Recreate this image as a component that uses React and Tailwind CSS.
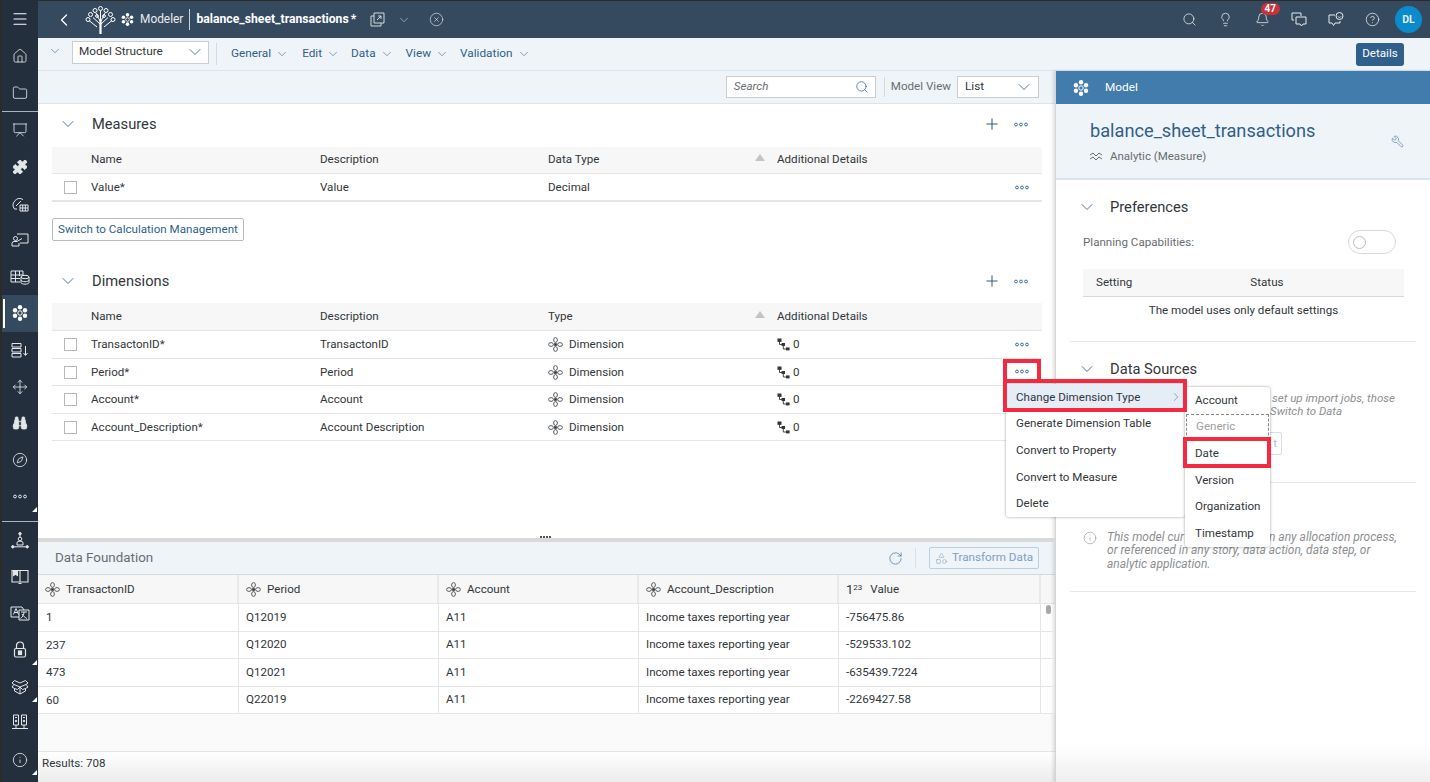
import {
  Binoculars, Bell, ChevronDown, ChevronLeft, ChevronRight, CircleHelp, CircleX, Compass, Folder,
  House, Info, Lightbulb, Menu, Plus, Presentation, Puzzle, RotateCw, Search, Wrench, Move, Shapes,
} from 'lucide-react'

const FONT = 'font-["Roboto",Arial,sans-serif]'

function Dots({ className = 'text-[#3f6d96]' }) {
  return (
    <svg width="14" height="5" viewBox="0 0 14 5" className={className} fill="none" stroke="currentColor" strokeWidth="1">
      <circle cx="2" cy="2.5" r="1.4" />
      <circle cx="7" cy="2.5" r="1.4" />
      <circle cx="12" cy="2.5" r="1.4" />
    </svg>
  )
}

function ModelIcon({ size = 16, className = 'text-white' }) {
  return (
    <svg width={size} height={size} viewBox="0 0 16 16" className={className} fill="currentColor">
      <circle cx="8" cy="2.3" r="2.2" />
      <circle cx="13" cy="5.2" r="2.2" />
      <circle cx="13" cy="10.8" r="2.2" />
      <circle cx="8" cy="13.7" r="2.2" />
      <circle cx="3" cy="10.8" r="2.2" />
      <circle cx="3" cy="5.2" r="2.2" />
      <circle cx="8" cy="8" r="2.2" fill="none" stroke="currentColor" strokeWidth="1" />
    </svg>
  )
}

function DimIcon() {
  return (
    <svg width="15" height="15" viewBox="0 0 15 15" fill="none" stroke="#4b4f53" strokeWidth="0.9" className="shrink-0">
      <ellipse cx="7.5" cy="3" rx="1.9" ry="2.4" />
      <ellipse cx="7.5" cy="12" rx="1.9" ry="2.4" />
      <ellipse cx="3" cy="7.5" rx="2.4" ry="1.9" />
      <ellipse cx="12" cy="7.5" rx="2.4" ry="1.9" />
      <circle cx="7.5" cy="7.5" r="1.3" fill="#32363a" />
    </svg>
  )
}

function HierarchyIcon() {
  return (
    <svg width="13" height="13" viewBox="0 0 13 13" fill="#32363a" className="shrink-0">
      <rect x="0.5" y="0.5" width="4" height="3.4" />
      <rect x="4.6" y="5" width="3.4" height="3" />
      <rect x="9" y="9.4" width="3.6" height="3" />
      <path d="M2.5 3.5v3h2.5M6.3 8v3h3" fill="none" stroke="#32363a" strokeWidth="0.9" />
    </svg>
  )
}

function TreeLogo() {
  return (
    <svg width="31" height="30" viewBox="0 0 31 30" fill="none" stroke="white" strokeWidth="1" className="shrink-0">
      <path d="M15 29V15M16 29V15" strokeWidth="1.2" />
      <path d="M15 19L8 12.5M16 19l7-6.5M15 16L11 8M16 16l4-8M15.5 15V6M12 22L4 15.5M19 22l8-6.5" />
      <circle cx="15.5" cy="3.5" r="2" />
      <circle cx="10" cy="5.5" r="2" />
      <circle cx="21" cy="5.5" r="2" />
      <circle cx="5.5" cy="9.5" r="2" />
      <circle cx="25.5" cy="9.5" r="2" />
      <circle cx="3" cy="14.5" r="2" />
      <circle cx="28" cy="14.5" r="2" />
      <circle cx="12" cy="11" r="1.4" />
      <circle cx="19" cy="11" r="1.4" />
    </svg>
  )
}

// sidebar glyphs the icon packs don't really have
const glyph = 'fill-none stroke-current'

function GaugeTable() {
  return (
    <svg width="18" height="16" viewBox="0 0 18 16" className={glyph} strokeWidth="1">
      <path d="M6 13H3.5A6.5 6.5 0 0 1 12 3.500M5 10l5-5" />
      <path d="M9 9h8v6H9zM9 12h8M11.7 9v6M14.3 9v6" />
    </svg>
  )
}

function PersonBoard() {
  return (
    <svg width="18" height="16" viewBox="0 0 18 16" className={glyph} strokeWidth="1">
      <path d="M6 2h11v9h-8" />
      <circle cx="4.500" cy="6.500" r="2" />
      <path d="M1 14v-2.500a2 2 0 0 1 2-2h3l5-3M1 14h7v-3" />
    </svg>
  )
}

function TableDb() {
  return (
    <svg width="20" height="16" viewBox="0 0 20 16" className={glyph} strokeWidth="1">
      <path d="M10 13H1V2h12v4M1 6h12M1 9.500h9M5.500 2v11M9.500 2v5" />
      <ellipse cx="15" cy="8" rx="4" ry="1.700" />
      <path d="M11 8v5.500c0 1 1.800 1.700 4 1.700s4-.7 4-1.700V8M11 11c0 1 1.800 1.700 4 1.700s4-.7 4-1.700" />
    </svg>
  )
}

function StackDown() {
  return (
    <svg width="18" height="16" viewBox="0 0 18 16" className={glyph} strokeWidth="1">
      <path d="M1 1.500h9v3.500H1zM1 6.500h9V10H1zM1 11.500h9V15H1zM14.500 4v9M12.500 11l2 2.500 2-2.500" />
    </svg>
  )
}

function NetPerson() {
  return (
    <svg width="18" height="17" viewBox="0 0 18 17" className={glyph} strokeWidth="1">
      <circle cx="9" cy="1.700" r="1.200" className="fill-current" />
      <circle cx="1.800" cy="14.800" r="1.200" className="fill-current" />
      <circle cx="16.200" cy="14.800" r="1.200" className="fill-current" />
      <path d="M3 14.800h12M9 3v2" />
      <circle cx="9" cy="7" r="1.800" />
      <path d="M6 13v-2a2 2 0 0 1 2-1.800h2a2 2 0 0 1 2 1.800v2z" />
    </svg>
  )
}

function SquareBook() {
  return (
    <svg width="18" height="15" viewBox="0 0 18 15" className={glyph} strokeWidth="1.100">
      <path d="M1 1.500h16v11.500H1zM9 1.500V13M7.500 14.500h3" />
      <path d="M2.500 1.500h4v5l-2-1.200-2 1.200z" className="fill-current" />
    </svg>
  )
}

function TranslateBoxes() {
  return (
    <svg width="20" height="15" viewBox="0 0 20 15" className={glyph} strokeWidth="1">
      <path d="M9 11H1V1h11l2 3" />
      <path d="M9 4h10v10H9z" />
      <path d="M3.500 8.500l2.500-6 2.500 6M4.500 6.500h3M11 6h6M14 6c0 3-1.500 5-3.500 6.500M12 8c1 2 3 3.500 5 4.500" />
    </svg>
  )
}

function LockIcon() {
  return (
    <svg width="14" height="17" viewBox="0 0 14 17" className={glyph} strokeWidth="1.200">
      <path d="M3.500 7.500V4.500a3.500 3.500 0 0 1 7 0v3" />
      <rect x="1.500" y="7.500" width="11" height="8.500" rx="1.500" />
      <rect x="5.500" y="10" width="3" height="3.500" className="fill-current" />
    </svg>
  )
}

function OpenBox() {
  return (
    <svg width="18" height="17" viewBox="0 0 18 17" className={glyph} strokeWidth="1">
      <path d="M9 5L3.500 2.500 1 5l2 1.500L1 9l2.500 1.500M9 5l5.500-2.500L17 5l-2 1.500L17 9l-2.500 1.500M3 6.500L9 9l6-2.500M9 9v7M3.500 10.500V13L9 16l5.500-3v-2.500M9 9l-2.500 2.500-3-1M9 9l2.500 2.500 3-1" />
    </svg>
  )
}

function Racks() {
  return (
    <svg width="18" height="17" viewBox="0 0 18 17" className={glyph} strokeWidth="1">
      <path d="M2.500 1h5v10h-5zM10.500 1h5v10h-5zM5 11v3.500M13 11v3.500M1 14.500h16M4 3.500h2M12 3.500h2" />
      <circle cx="5" cy="7" r="0.800" className="fill-current" />
      <circle cx="13" cy="7" r="0.800" className="fill-current" />
    </svg>
  )
}

function SolidPuzzle(props) {
  return <Puzzle {...props} fill="currentColor" />
}

function SolidBinoculars(props) {
  return <Binoculars {...props} fill="currentColor" />
}

function SideItem({ icon: Icon, active, corner }) {
  return (
    <div className={`relative flex h-[36.6px] items-center justify-center text-[#e4e7ea] ${active ? 'bg-[#354a5f]' : ''}`}>
      {active && <div className="absolute top-1 bottom-1 left-[1px] w-[2px] bg-white" />}
      <Icon size={16} strokeWidth={1.25} />
      {corner && (
        <div className="absolute right-[1px] bottom-[3px] h-0 w-0 border-b-[5px] border-l-[5px] border-b-white border-l-transparent" />
      )}
    </div>
  )
}

function Sidebar() {
  return (
    <div className="flex h-full w-[38px] shrink-0 flex-col border-l-2 border-[#2b2b2b] bg-[#232f3c]">
      <div className="flex h-[38px] items-center justify-center">
        <Menu size={18} strokeWidth={1.5} className="text-white" />
      </div>
      <SideItem icon={House} />
      <SideItem icon={Folder} />
      <div className="h-px shrink-0 bg-[#a9b4be]" />
      <SideItem icon={Presentation} />
      <SideItem icon={SolidPuzzle} />
      <SideItem icon={GaugeTable} />
      <SideItem icon={PersonBoard} />
      <SideItem icon={TableDb} />
      <SideItem icon={ModelIcon} active />
      <SideItem icon={StackDown} />
      <SideItem icon={Move} />
      <SideItem icon={SolidBinoculars} />
      <SideItem icon={Compass} />
      <SideItem icon={() => <Dots className="text-[#e4e7ea]" />} corner />
      <div className="mt-[6px] h-px shrink-0 bg-[#a9b4be]" />
      <SideItem icon={NetPerson} />
      <SideItem icon={SquareBook} />
      <SideItem icon={TranslateBoxes} />
      <SideItem icon={LockIcon} corner />
      <SideItem icon={OpenBox} corner />
      <SideItem icon={Racks} />
      <SideItem icon={Info} corner />
    </div>
  )
}

function PopOut() {
  return (
    <svg width="15" height="15" viewBox="0 0 15 15" fill="none" stroke="currentColor" strokeWidth="1" className="ml-[14px] text-[#d5dade]">
      <path d="M4 1h10v10H4zM4 4H1v10h10v-3M7 8l4-4M8 4h3v3" />
    </svg>
  )
}

function HeaderChat() {
  return (
    <svg width="16" height="15" viewBox="0 0 16 15" fill="none" stroke="currentColor" strokeWidth="1" className="ml-[21px]">
      <path d="M10 4V1H1v7h2" />
      <path d="M5 5h10v7h-3l-1.500 2L9 12H5z" />
    </svg>
  )
}

function HeaderSmile() {
  return (
    <svg width="16" height="15" viewBox="0 0 16 15" fill="none" stroke="currentColor" strokeWidth="1" className="ml-[21px]">
      <path d="M7 3H1v8h3l1.500 2.500L7 11h5V9" />
      <circle cx="11.500" cy="4" r="3.500" />
      <path d="M10 4.500a1.700 1.700 0 0 0 3 0" />
    </svg>
  )
}

function Header() {
  return (
    <div className="flex h-[38px] shrink-0 items-center border-t border-[#2b2b2b] bg-[#354a5f] text-white">
      <ChevronLeft size={20} strokeWidth={1.5} className="ml-[16px]" />
      <div className="ml-[11px]"><TreeLogo /></div>
      <div className="ml-[5px]"><ModelIcon size={13} /></div>
      <span className="ml-[6px] text-[11.9px] text-[#e8ebee]">Modeler</span>
      <div className="ml-[6px] h-[21px] w-px bg-[#c9d0d6]" />
      <span className="ml-[6px] text-[12.2px] font-bold">balance_sheet_transactions</span>
      <span className="ml-[2px] text-[12.2px] font-bold">*</span>
      <PopOut />
      <ChevronDown size={14} strokeWidth={1} className="ml-[12px] text-[#d5dade]" />
      <CircleX size={15} strokeWidth={1} className="ml-[18px] text-[#e8ebee]" />
      <div className="ml-auto flex items-center text-[#e8ebee]">
        <Search size={15} strokeWidth={1.25} />
        <Lightbulb size={15} strokeWidth={1.25} className="ml-[21px]" />
        <div className="relative ml-[22px]">
          <Bell size={15} strokeWidth={1.25} />
          <div className="absolute -top-[9px] -right-[10px] rounded-full bg-[#c9323a] px-[4px] text-[10px] leading-[12px] font-bold text-white">47</div>
        </div>
        <HeaderChat />
        <HeaderSmile />
        <CircleHelp size={15} strokeWidth={1.25} className="ml-[21px]" />
        <div className="mr-[8px] ml-[15px] flex h-[27px] w-[27px] items-center justify-center rounded-full bg-[#0a8ccc] text-[10.5px] font-bold">DL</div>
      </div>
    </div>
  )
}

function ToolMenu({ label, ml }) {
  return (
    <div className={`flex items-center text-[11.8px] text-[#2f5f8a] ${ml}`}>
      {label}
      <ChevronDown size={14} strokeWidth={1} className="ml-[4px]" />
    </div>
  )
}

function Toolbar() {
  return (
    <div className="flex h-[33px] shrink-0 items-center border-b border-[#d8e4ef] bg-[#eff4f9]">
      <ChevronDown size={14} strokeWidth={1} className="mb-[6px] ml-[10px] text-[#2f5f8a]" />
      <div className="mb-[4px] ml-[10px] flex h-[23px] w-[137px] items-center justify-between border border-[#ccc] bg-white pr-[3px] pl-[6px] text-[11.8px] text-[#32363a]">
        Model Structure
        <ChevronDown size={20} strokeWidth={1} className="text-[#2f5f8a]" />
      </div>
      <div className="ml-[7px] h-[22px] w-px bg-[#d4dae0]" />
      <ToolMenu label="General" ml="ml-[14px]" />
      <ToolMenu label="Edit" ml="ml-[13px]" />
      <ToolMenu label="Data" ml="ml-[11px]" />
      <ToolMenu label="View" ml="ml-[12px]" />
      <ToolMenu label="Validation" ml="ml-[11px]" />
      <div className="mr-[26px] ml-auto flex h-[23px] w-[48px] items-center justify-center rounded-[3px] bg-[#2f5f8a] text-[11.6px] text-white">Details</div>
    </div>
  )
}

function SectionHead({ title }) {
  return (
    <div className="flex h-[40px] items-center">
      <ChevronDown size={20} strokeWidth={1} className="ml-[20px] text-[#2f5f8a]" />
      <span className="ml-[14px] text-[14.7px] text-[#32363a]">{title}</span>
      <Plus size={18} strokeWidth={1.4} className="mr-[13px] ml-auto text-[#2f5f8a]" />
      <div className="mr-[27px]"><Dots /></div>
    </div>
  )
}

function TableHead({ third, className }) {
  return (
    <div className={`mr-[13px] ml-[14px] grid grid-cols-[39px_229px_228px_229px_1fr] items-center border-b border-[#e5e5e5] bg-[#f7f7f7] text-[11.6px] text-[#32363a] ${className}`}>
      <div />
      <div>Name</div>
      <div>Description</div>
      <div className="relative">
        {third}
        <div className="absolute top-[3px] right-[12px] h-0 w-0 border-x-[5px] border-b-[7px] border-x-transparent border-b-[#c4c4c4]" />
      </div>
      <div>Additional Details</div>
    </div>
  )
}

function Check() {
  return <div className="ml-[12px] h-[13px] w-[13px] border border-[#b8b8b8] bg-white" />
}

function DimRow({ name, desc, dots }) {
  return (
    <div className="mr-[13px] ml-[14px] grid h-[27.5px] grid-cols-[39px_229px_228px_229px_1fr] items-center border-b border-[#e5e5e5] pt-[1px] text-[11.6px] text-[#32363a]">
      <Check />
      <div>{name}</div>
      <div>{desc}</div>
      <div className="flex items-center gap-[6px]"><DimIcon />Dimension</div>
      <div className="flex items-center gap-[3px]">
        <HierarchyIcon />0
        {dots && <div className="mr-[13px] ml-auto"><Dots /></div>}
      </div>
    </div>
  )
}

function Structure() {
  return (
    <div className="min-h-0 flex-1 bg-white">
      <SectionHead title="Measures" />
      <TableHead third="Data Type" className="mt-[3px] h-[27px]" />
      <div className="mr-[13px] ml-[14px] grid h-[28px] grid-cols-[39px_229px_228px_229px_1fr] items-center border-b-2 border-[#e5e5e5] pt-[1px] text-[11.6px] text-[#32363a]">
        <Check />
        <div>Value*</div>
        <div>Value</div>
        <div>Decimal</div>
        <div className="flex justify-end pr-[13px]"><Dots /></div>
      </div>
      <div className="mt-[16px] ml-[14px] flex h-[23px] w-[192px] items-center justify-center rounded-[2px] border border-[#bbb] bg-white text-[11.6px] whitespace-nowrap text-[#2f5f8a]">
        Switch to Calculation Management
      </div>
      <div className="mt-[20px]"><SectionHead title="Dimensions" /></div>
      <TableHead third="Type" className="mt-[2px] h-[28px]" />
      <DimRow name="TransactonID*" desc="TransactonID" dots />
      <DimRow name="Period*" desc="Period" />
      <DimRow name="Account*" desc="Account" />
      <DimRow name="Account_Description*" desc="Account Description" />
    </div>
  )
}

const dataRows = [
  ['1', 'Q12019', '-756475.86'],
  ['237', 'Q12020', '-529533.102'],
  ['473', 'Q12021', '-635439.7224'],
  ['60', 'Q22019', '-2269427.58'],
]

const dataCols = 'grid-cols-[201px_200px_200px_200px_202px_1fr]'

function HeadCell({ children }) {
  return <div className="flex h-full items-center gap-[6px] border-r-2 border-[#e9e9e9] pt-[1px] pl-[7px]">{children}</div>
}

function DataCell({ children }) {
  return <div className="flex h-full items-center border-r border-[#e5e5e5] pl-[7px]">{children}</div>
}

function DataFoundation() {
  return (
    <div className="flex h-[244px] shrink-0 flex-col">
      <div className="relative h-[4px] shrink-0 bg-[#d9d9d9]">
        <div className="absolute -top-[2px] left-[502px] flex gap-px">
          <div className="h-[2px] w-[2px] bg-[#555]" /><div className="h-[2px] w-[2px] bg-[#555]" />
          <div className="h-[2px] w-[2px] bg-[#555]" /><div className="h-[2px] w-[2px] bg-[#555]" />
        </div>
      </div>
      <div className="flex h-[33px] shrink-0 items-center border-b border-[#d4d9de] bg-[#eff4f9]">
        <span className="ml-[17px] text-[13.4px] text-[#6a6d70]">Data Foundation</span>
        <RotateCw size={15} strokeWidth={1} className="ml-auto text-[#2f5f8a]" />
        <div className="ml-[12px] h-[20px] w-px bg-[#dbe0e5]" />
        <div className="mr-[16px] ml-[13px] flex h-[22px] w-[110px] items-center justify-center gap-[4px] rounded-[2px] border border-[#b9cfe2] text-[11.7px] text-[#7f9fbd]">
          <Shapes size={13} strokeWidth={1} />Transform Data
        </div>
      </div>
      <div className={`grid h-[29px] shrink-0 ${dataCols} items-center border-b border-[#e5e5e5] bg-[#f7f7f7] text-[11.6px] text-[#32363a]`}>
        <HeadCell><DimIcon />TransactonID</HeadCell>
        <HeadCell><DimIcon />Period</HeadCell>
        <HeadCell><DimIcon />Account</HeadCell>
        <HeadCell><DimIcon />Account_Description</HeadCell>
        <HeadCell><span className="text-[13px]">1<sup className="text-[8px]">23</sup></span><span className="ml-[2px]">Value</span></HeadCell>
        <div />
      </div>
      <div className="relative">
        {dataRows.map((r) => (
          <div key={r[0]} className={`grid h-[27.5px] ${dataCols} items-center border-b border-[#e5e5e5] text-[11.6px] text-[#32363a]`}>
            <div className="flex h-full items-center border-r border-[#e5e5e5] pt-[1px] pl-[8px]">{r[0]}</div>
            <DataCell>{r[1]}</DataCell>
            <DataCell>A11</DataCell>
            <DataCell>Income taxes reporting year</DataCell>
            <DataCell>{r[2]}</DataCell>
            <div />
          </div>
        ))}
        <div className="absolute top-[0px] right-[4px] mt-[1px] h-[9px] w-[5px] rounded-full bg-[#a8a8a8]" />
      </div>
      <div className="min-h-0 flex-1 border-b border-[#e5e5e5] bg-[#fafafa]" />
      <div className="flex h-[30px] shrink-0 bg-linear-to-b from-white to-[#ececec]">
        <span className="mt-[3px] ml-[4px] text-[11.6px] text-[#32363a]">Results: 708</span>
      </div>
    </div>
  )
}

function RightPanel() {
  return (
    <div className="flex w-[375px] shrink-0 flex-col border-l border-[#d5d5d5] bg-white shadow-[-2px_0_3px_rgba(0,0,0,0.12)]">
      <div className="flex h-[33px] shrink-0 items-center bg-[#427cac] text-white">
        <div className="ml-[17px]"><ModelIcon size={16} /></div>
        <span className="ml-[16px] text-[11.8px]">Model</span>
      </div>
      <div className="relative h-[76px] shrink-0 border-b-2 border-[#d8e4ef] bg-[#eff4f9]">
        <div className="mt-[14px] ml-[34px] text-[18.2px] leading-[25px] text-[#2f5f8a]">balance_sheet_transactions</div>
        <div className="mt-[5px] ml-[33px] flex items-center gap-[6px] text-[11.5px] leading-[16px] text-[#6a6d70]">
          <svg width="15" height="11" viewBox="0 0 15 11" fill="none" stroke="currentColor" strokeWidth="1">
            <path d="M1 4l3-2 3 3 3-3 3 2M1 8l3-2 3 3 3-3 3 2" />
          </svg>
          Analytic (Measure)
        </div>
        <Wrench size={13} strokeWidth={1} className="absolute top-[31px] right-[26px] -scale-x-100 text-[#2f5f8a]" />
      </div>
      <div className="flex h-[161px] shrink-0 flex-col">
        <div className="mt-[16px] flex items-center">
          <ChevronDown size={20} strokeWidth={1} className="ml-[21px] text-[#2f5f8a]" />
          <span className="ml-[13px] text-[14.7px] text-[#32363a]">Preferences</span>
        </div>
        <div className="mt-[12px] mr-[34px] ml-[27px] flex items-center justify-between">
          <span className="mt-[2px] text-[11.6px] text-[#6a6d70]">Planning Capabilities:</span>
          <div className="flex h-[24px] w-[48px] items-center rounded-full border border-[#d9d9d9] pl-[4px]">
            <div className="h-[13px] w-[13px] rounded-full border border-[#bdbdbd]" />
          </div>
        </div>
        <div className="mt-[15px] mr-[26px] ml-[27px] flex h-[28px] items-center border-b border-[#d9d9d9] bg-[#f7f7f7] text-[11.6px] text-[#32363a]">
          <span className="ml-[13px]">Setting</span>
          <span className="ml-[118px]">Status</span>
        </div>
        <div className="mt-[5px] mr-[26px] ml-[27px] text-center text-[11.6px] text-[#32363a]">The model uses only default settings</div>
      </div>
      <div className="mx-[14px] h-px shrink-0 bg-[#e8e8e8]" />
      <div className="h-[140px] shrink-0">
        <div className="mt-[16px] flex items-center">
          <ChevronDown size={20} strokeWidth={1} className="ml-[21px] text-[#2f5f8a]" />
          <span className="ml-[13px] text-[14.7px] text-[#32363a]">Data Sources</span>
        </div>
        <div className="mt-[12px] text-[11.5px] leading-[13px] text-[#8c8f92] italic">
          <div className="ml-[216px]">set up import jobs, those</div>
          <div className="ml-[214px]">Switch to Data</div>
        </div>
        <div className="mt-[14px] ml-[100px] flex h-[23px] w-[126px] items-center justify-end rounded-[2px] border border-[#d5dfe8] pr-[4px] text-[11.6px] text-[#a9c1d8]">
          t
        </div>
      </div>
      <div className="mx-[14px] h-px shrink-0 bg-[#e8e8e8]" />
      <div className="relative h-[108px] shrink-0">
        <Info size={14} strokeWidth={1} className="absolute top-[48px] left-[27px] text-[#8c8f92]" />
        <div className="mt-[48px] ml-[51px] text-[12px] leading-[13.4px] text-[#8c8f92] italic">
          <div className="flex">
            <span>This model cur</span>
            <span className="ml-[85px]">n any allocation process,</span>
          </div>
          <div>or referenced in any story, data action, data step, or</div>
          <div>analytic application.</div>
        </div>
      </div>
      <div className="mx-[14px] h-px shrink-0 bg-[#e8e8e8]" />
      <div className="min-h-0 flex-1 bg-linear-to-b from-white from-80% to-[#efefef]" />
    </div>
  )
}

function MenuItem({ children, hi, arrow }) {
  return (
    <div className={`flex h-[26.7px] items-center justify-between px-[10px] ${hi ? 'bg-[#e5edf6]' : ''}`}>
      {children}
      {arrow && <ChevronRight size={14} strokeWidth={1} className="-mr-[8px] text-[#6a6d70]" />}
    </div>
  )
}

// menus and red callouts sit on top of the page
function Overlays() {
  return (
    <>
      <div className="absolute top-[384px] left-[1006px] w-[179px] rounded-[3px] bg-white text-[11.6px] text-[#32363a] shadow-[0_0_3px_rgba(0,0,0,0.4)]">
        <MenuItem hi arrow>Change Dimension Type</MenuItem>
        <MenuItem>Generate Dimension Table</MenuItem>
        <MenuItem>Convert to Property</MenuItem>
        <MenuItem>Convert to Measure</MenuItem>
        <MenuItem>Delete</MenuItem>
      </div>
      <div className="absolute top-[387px] left-[1185px] w-[85px] rounded-[3px] bg-white text-[11.6px] text-[#32363a] shadow-[0_0_3px_rgba(0,0,0,0.4)]">
        <MenuItem>Account</MenuItem>
        <div className="mx-[1px] flex h-[26.7px] items-center border border-dashed border-[#888] px-[9px] text-[#a0a0a0]">Generic</div>
        <MenuItem>Date</MenuItem>
        <MenuItem>Version</MenuItem>
        <MenuItem>Organization</MenuItem>
        <MenuItem>Timestamp</MenuItem>
      </div>
      <div className="absolute top-[359px] left-[1003px] flex h-[24px] w-[38px] items-center justify-center border-4 border-[#f42a41] bg-white"><Dots /></div>
      <div className="absolute top-[379px] left-[1003px] h-[33px] w-[184px] border-4 border-[#f42a41]" />
      <div className="absolute top-[437px] left-[1183px] h-[31px] w-[88px] border-4 border-[#f42a41]" />
    </>
  )
}

export default function App() {
  return (
    <div className={`relative flex h-[782px] w-[1430px] overflow-hidden bg-white ${FONT}`}>
      <Sidebar />
      <div className="flex min-w-0 flex-1 flex-col">
        <Header />
        <Toolbar />
        <div className="flex min-h-0 flex-1">
          <div className="flex min-w-0 flex-1 flex-col">
            <div className="flex h-[33px] shrink-0 items-center justify-end border-b border-[#dfe3e7] bg-[#eff4f9]">
              <div className="flex h-[22px] w-[150px] items-center justify-between border border-[#ccc] bg-white pr-[6px] pl-[7px] text-[11.6px] text-[#6a6d70] italic">
                Search
                <Search size={14} strokeWidth={1.25} className="text-[#2f5f8a]" />
              </div>
              <div className="ml-[8px] h-[20px] w-px bg-[#d4dae0]" />
              <span className="ml-[6px] text-[11.6px] text-[#6a6d70]">Model View</span>
              <div className="mr-[16px] ml-[6px] flex h-[22px] w-[82px] items-center justify-between border border-[#ccc] bg-white pr-[4px] pl-[7px] text-[11.8px] text-[#32363a]">
                List
                <ChevronDown size={20} strokeWidth={1} className="text-[#2f5f8a]" />
              </div>
            </div>
            <Structure />
            <DataFoundation />
          </div>
          <RightPanel />
        </div>
      </div>
      <Overlays />
    </div>
  )
}
